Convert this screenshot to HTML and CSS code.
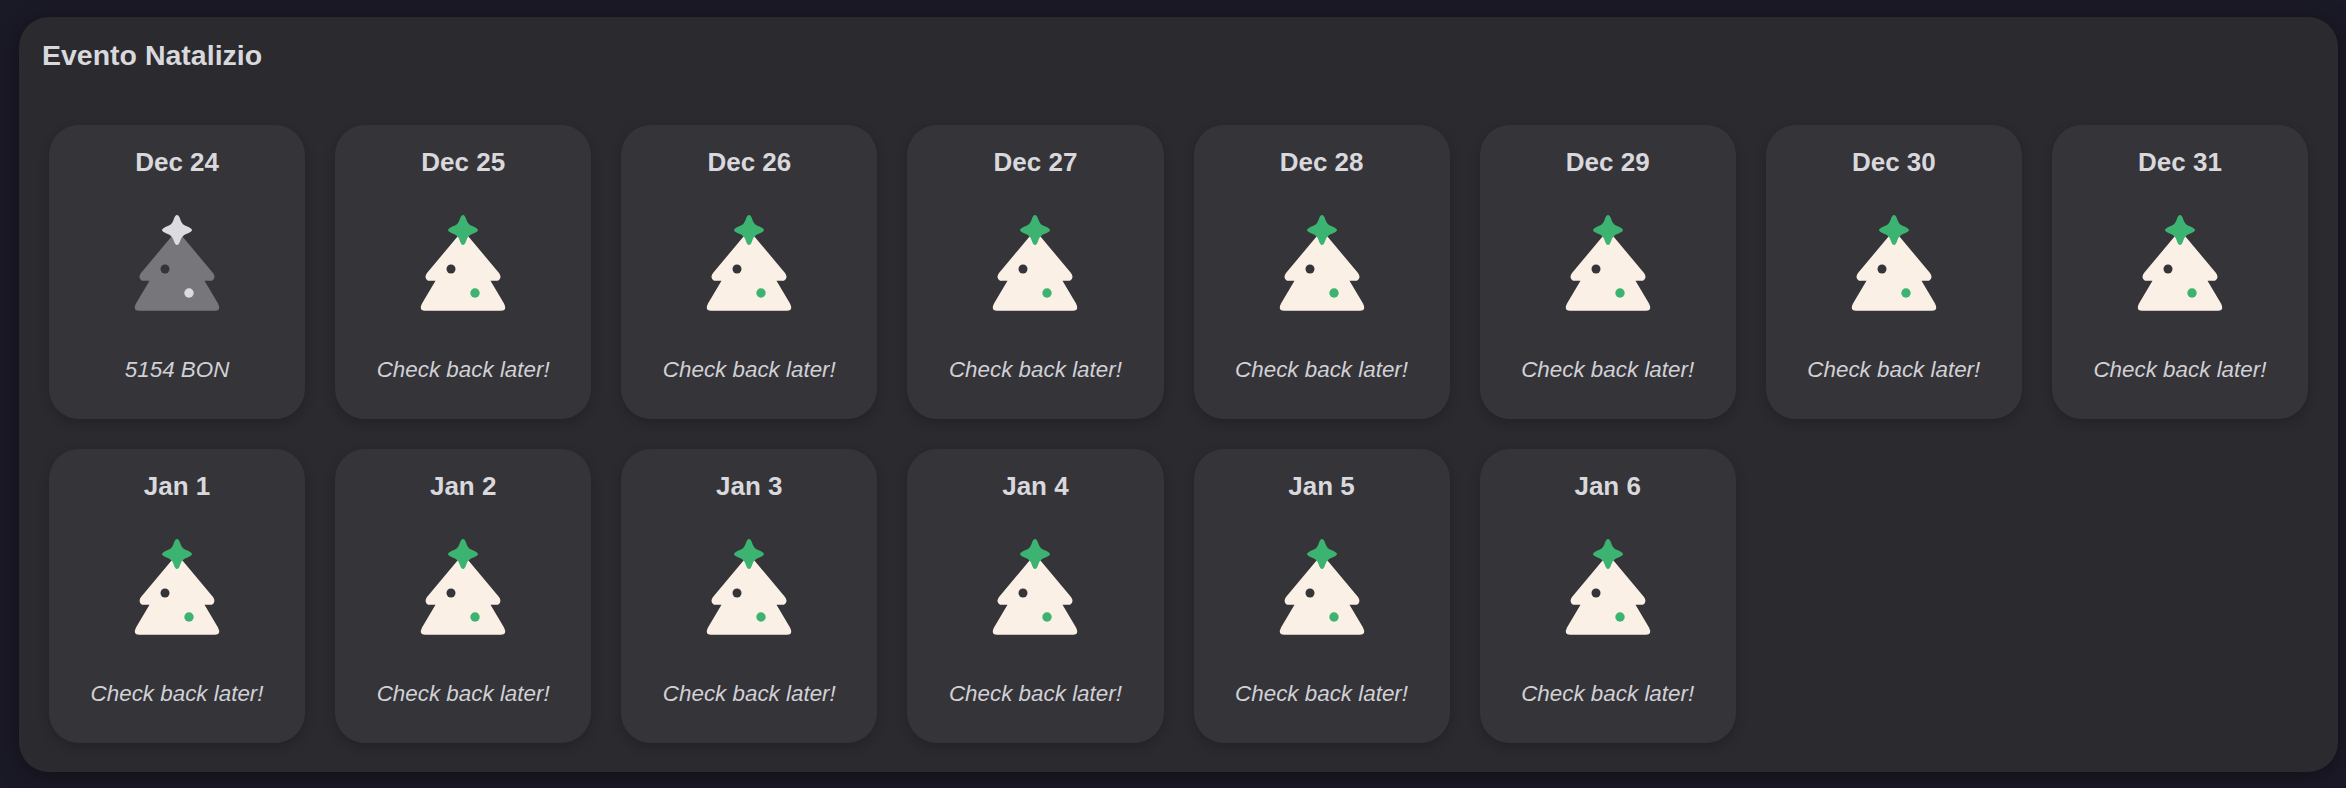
FILE: index.html
```html
<!DOCTYPE html>
<html lang="it">
<head>
<meta charset="utf-8">
<title>Evento Natalizio</title>
<link rel="stylesheet" href="styles.css">
</head>
<body>
<svg class="defs" width="0" height="0" aria-hidden="true">
  <defs>
    <symbol id="tree" viewBox="0 0 100 110">
      <path class="tree-body" d="M50 20 L86 63 Q89.5 68 85 70.7 L77.5 70.7 L91 93.5 Q94.5 100.7 88 100.7 L12 100.7 Q5.5 100.7 9 93.5 L22.5 70.7 L15 70.7 Q10.5 68 14 63 Z"/>
      <circle class="ball-a" cx="38" cy="59" r="4.5"/>
      <circle class="ball-b" cx="62" cy="83" r="4.7"/>
      <path class="tree-star" d="M50 5 Q52 5 53.5 10 Q55 15 60.5 16.5 Q65 18.5 65 20 Q65 21.5 60.5 23.5 Q55 25 53.5 30 Q52 35 50 35 Q48 35 46.5 30 Q45 25 39.5 23.5 Q35 21.5 35 20 Q35 18.5 39.5 16.5 Q45 15 46.5 10 Q48 5 50 5Z"/>
    </symbol>
  </defs>
</svg>
<main class="panel">
  <h1 class="panel-title">Evento Natalizio</h1>
  <div class="calendar">
    <article class="day claimed"><h2 class="day-date">Dec 24</h2><svg class="tree"><use href="#tree"/></svg><p class="day-note">5154 BON</p></article>
    <article class="day"><h2 class="day-date">Dec 25</h2><svg class="tree"><use href="#tree"/></svg><p class="day-note">Check back later!</p></article>
    <article class="day"><h2 class="day-date">Dec 26</h2><svg class="tree"><use href="#tree"/></svg><p class="day-note">Check back later!</p></article>
    <article class="day"><h2 class="day-date">Dec 27</h2><svg class="tree"><use href="#tree"/></svg><p class="day-note">Check back later!</p></article>
    <article class="day"><h2 class="day-date">Dec 28</h2><svg class="tree"><use href="#tree"/></svg><p class="day-note">Check back later!</p></article>
    <article class="day"><h2 class="day-date">Dec 29</h2><svg class="tree"><use href="#tree"/></svg><p class="day-note">Check back later!</p></article>
    <article class="day"><h2 class="day-date">Dec 30</h2><svg class="tree"><use href="#tree"/></svg><p class="day-note">Check back later!</p></article>
    <article class="day"><h2 class="day-date">Dec 31</h2><svg class="tree"><use href="#tree"/></svg><p class="day-note">Check back later!</p></article>
    <article class="day"><h2 class="day-date">Jan 1</h2><svg class="tree"><use href="#tree"/></svg><p class="day-note">Check back later!</p></article>
    <article class="day"><h2 class="day-date">Jan 2</h2><svg class="tree"><use href="#tree"/></svg><p class="day-note">Check back later!</p></article>
    <article class="day"><h2 class="day-date">Jan 3</h2><svg class="tree"><use href="#tree"/></svg><p class="day-note">Check back later!</p></article>
    <article class="day"><h2 class="day-date">Jan 4</h2><svg class="tree"><use href="#tree"/></svg><p class="day-note">Check back later!</p></article>
    <article class="day"><h2 class="day-date">Jan 5</h2><svg class="tree"><use href="#tree"/></svg><p class="day-note">Check back later!</p></article>
    <article class="day"><h2 class="day-date">Jan 6</h2><svg class="tree"><use href="#tree"/></svg><p class="day-note">Check back later!</p></article>
  </div>
</main>
</body>
</html>
```
FILE: styles.css
```css
* { box-sizing: border-box; }
html, body { height: 788px; }
body {
  margin: 0;
  padding: 17px 8px 0 19px;
  overflow: hidden;
  background: #1a1926;
  font-family: "Liberation Sans", Arial, sans-serif;
  color: #d8d8dd;
}
.defs { position: absolute; }
.panel {
  height: 755px;
  padding: 24px 30px 0;
  background: #2b2a2e;
  border-radius: 30px;
  box-shadow: 0 4px 24px rgba(0, 0, 0, 0.35);
}
.panel-title {
  margin: 0 0 0 -7px;
  height: 84px;
  font-size: 28.5px;
  line-height: 28px;
  font-weight: 700;
}
.calendar {
  display: grid;
  grid-template-columns: repeat(8, 1fr);
  gap: 30px;
}
.day {
  height: 294px;
  padding-top: 22px;
  display: flex;
  flex-direction: column;
  align-items: center;
  background: #353439;
  border-radius: 30px;
  box-shadow: 0 4px 12px rgba(0, 0, 0, 0.2);
}
.day-date {
  margin: 0;
  font-size: 26px;
  line-height: 30px;
  font-weight: 700;
}
.tree {
  width: 100px;
  height: 110px;
  margin-top: 33px;
  --body: #faf0e6;
  --star: #3cb371;
  --a: #353439;
  --b: #3cb371;
}
.claimed .tree {
  --body: #77777b;
  --star: #dcdce0;
  --a: #353439;
  --b: #dcdce0;
}
.tree-body { fill: var(--body); }
.tree-star { fill: var(--star); }
.ball-a { fill: var(--a); }
.ball-b { fill: var(--b); }
.day-note {
  margin: 35px 0 0;
  font-size: 22.4px;
  line-height: 30px;
  font-style: italic;
  color: #d0d0d5;
}
```
